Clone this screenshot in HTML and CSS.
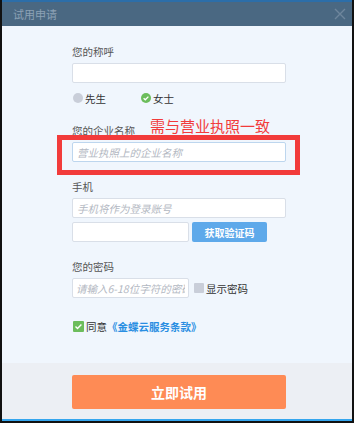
FILE: index.html
```html
<!DOCTYPE html>
<html>
<head>
	<title>试用申请</title>
	<meta charset="utf-8">
	<link rel="stylesheet" href="styles.css">
</head>
<body>
	<div class="dialog">
		<header class="titlebar">
			<span class="title">试用申请</span>
			<svg class="close" width="12" height="12" viewBox="0 0 12 12"><path d="M1 1L11 11M11 1L1 11" stroke="#6e869c" stroke-width="1.4" fill="none"/></svg>
		</header>
		<main class="content">
			<label class="label first">您的称呼</label>
			<input class="text" type="text">
			<div class="gender">
				<span class="opt"><i class="radio"></i>先生</span>
				<span class="opt"><i class="radio on"><svg width="10" height="10" viewBox="0 0 10 10"><path d="M2.6 5.2L4.3 6.8L7.4 3.6" stroke="#fff" stroke-width="1.3" fill="none"/></svg></i>女士</span>
			</div>

			<label class="label">您的企业名称</label>
			<input class="text focus" type="text" placeholder="营业执照上的企业名称">

			<label class="label">手机</label>
			<input class="text" type="text" placeholder="手机将作为登录账号">
			<div class="code">
				<input class="text short" type="text">
				<button class="getcode">获取验证码</button>
			</div>

			<label class="label">您的密码</label>
			<div class="pwd">
				<input class="text short" type="password" placeholder="请输入6-18位字符的密码">
				<span class="opt"><i class="box"></i>显示密码</span>
			</div>

			<div class="agree">
				<i class="box on"><svg width="11" height="11" viewBox="0 0 11 11"><path d="M2.5 5.6L4.5 7.6L8.4 3.5" stroke="#fff" stroke-width="1.4" fill="none"/></svg></i>同意<a href="">《金蝶云服务条款》</a>
			</div>

			<!-- annotation drawn over the form -->
			<div class="mark"></div>
			<span class="note">需与营业执照一致</span>
		</main>
		<footer class="bottom">
			<button class="submit">立即试用</button>
		</footer>
	</div>
</body>
</html>
```

FILE: styles.css
```css
body {
	margin: 0;
	width: 356px;
	height: 426px;
	background: #fff;
	font-family: "Noto Sans CJK SC", "Noto Sans", sans-serif;
	overflow: hidden;
}
.dialog {
	width: 350px;
	height: 421px;
	border-left: 2px solid #111;
	border-right: 2px solid #111;
	border-bottom: 2px solid #111;
	display: flex;
	flex-direction: column;
}

/* title bar */
.titlebar {
	height: 24px;
	border-top: 2px solid #2c6ea9;
	background: #4a6882;
	display: flex;
	align-items: center;
	justify-content: space-between;
	padding: 0 6px 0 11px;
}
.title {
	color: #8ca1b5;
	font-size: 11px;
}

/* form */
.content {
	position: relative;
	flex: 1;
	background: #f0f6fd;
	padding: 18px 0 0 70px;
	display: flex;
	flex-direction: column;
	align-items: flex-start;
}
.label {
	display: block;
	height: 16px;
	line-height: 16px;
	font-size: 10.5px;
	color: #555;
	margin: 17px 0 3px;
}
.label.first {
	margin-top: 0;
}
.text {
	box-sizing: border-box;
	width: 214px;
	height: 20px;
	margin: 0;
	padding: 0 4px;
	border: 1px solid #d9dfe8;
	border-radius: 2px;
	background: #fff;
	font-family: inherit;
	font-size: 10.5px;
	outline: none;
}
.text.focus {
	border-color: #bdd6ee;
}
.text::placeholder {
	color: #b3b8c2;
	font-style: italic;
}
.text.short {
	width: 117px;
	padding: 0 3px;
}
.opt {
	display: inline-flex;
	align-items: center;
	font-size: 10.5px;
	color: #333;
}
.gender {
	display: flex;
	gap: 35px;
	height: 16px;
	margin-top: 7px;
	padding-left: 1px;
}
.radio {
	width: 10px;
	height: 10px;
	border-radius: 50%;
	background: #c9ced9;
	margin-right: 2px;
	display: flex;
}
.radio.on, .box.on {
	background: #6cbd5c;
}
.box {
	width: 10px;
	height: 10px;
	border-radius: 1px;
	background: #c9ced9;
	margin-right: 2px;
	display: inline-flex;
}
.code, .pwd {
	display: flex;
	align-items: center;
}
.code {
	margin-top: 4px;
	gap: 3px;
}
.pwd {
	gap: 5px;
}
.getcode {
	width: 75px;
	height: 20px;
	border: none;
	border-radius: 2px;
	background: #5ea9ea;
	color: #fff;
	font-family: inherit;
	font-size: 10px;
	font-weight: bold;
	padding: 0;
}
.agree {
	display: flex;
	align-items: center;
	height: 16px;
	margin-top: 20px;
	padding-left: 1px;
	font-size: 10.5px;
	color: #333;
}
.agree .box {
	width: 11px;
	height: 11px;
}
.agree a {
	color: #2a8ee2;
	font-weight: bold;
	text-decoration: none;
}
.mark {
	position: absolute;
	left: 55px;
	top: 109px;
	width: 233px;
	height: 30px;
	border: 5px solid #f23b3b;
}
.note {
	position: absolute;
	left: 148px;
	top: 90px;
	font-size: 15px;
	line-height: 20px;
	color: #f23b3b;
}

/* footer */
.bottom {
	box-sizing: border-box;
	height: 58px;
	background: #eceff4;
	border-bottom: 2px solid #35a6ee;
	padding: 12px 0 0 70px;
}
.submit {
	width: 214px;
	height: 34px;
	border: none;
	border-radius: 2px;
	background: #fe8b55;
	color: #fff;
	font-family: inherit;
	font-size: 14px;
	font-weight: bold;
}
```
